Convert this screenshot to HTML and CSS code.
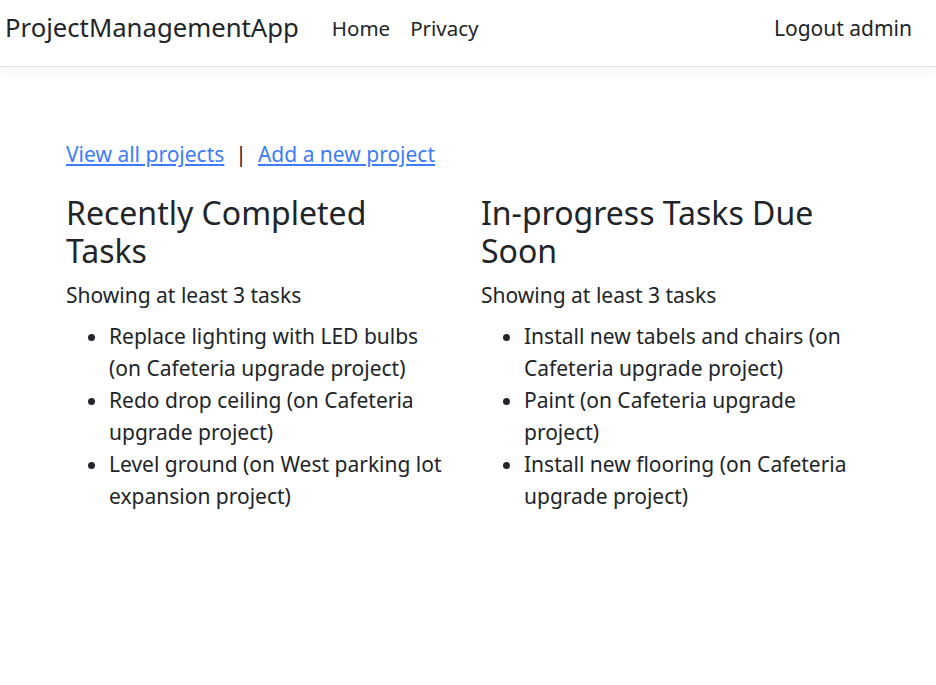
FILE: index.html
```html
<!DOCTYPE html>
<html lang="en">
<head>
<meta charset="utf-8">
<title>ProjectManagementApp</title>
<link rel="stylesheet" href="styles.css">
</head>
<body>
<header class="navbar">
  <a class="brand" href="#">ProjectManagementApp</a>
  <nav class="nav-links">
    <a class="nav-link" href="#">Home</a>
    <a class="nav-link" href="#">Privacy</a>
  </nav>
  <a class="nav-link logout" href="#">Logout admin</a>
</header>
<main class="content">
  <p class="actions">
    <a class="link" href="#">View all projects</a>
    <span class="sep">|</span>
    <a class="link" href="#">Add a new project</a>
  </p>
  <div class="columns">
    <section class="col">
      <h2 class="heading">Recently Completed Tasks</h2>
      <p class="count">Showing at least 3 tasks</p>
      <ul class="tasks">
        <li>Replace lighting with LED bulbs (on Cafeteria upgrade project)</li>
        <li>Redo drop ceiling (on Cafeteria upgrade project)</li>
        <li>Level ground (on West parking lot expansion project)</li>
      </ul>
    </section>
    <section class="col">
      <h2 class="heading">In-progress Tasks Due Soon</h2>
      <p class="count">Showing at least 3 tasks</p>
      <ul class="tasks">
        <li>Install new tabels and chairs (on Cafeteria upgrade project)</li>
        <li>Paint (on Cafeteria upgrade project)</li>
        <li>Install new flooring (on Cafeteria upgrade project)</li>
      </ul>
    </section>
  </div>
</main>
</body>
</html>
```
FILE: styles.css
```css
html, body {
  margin: 0;
  padding: 0;
  background: #ffffff;
}
body {
  font-family: "Noto Sans", "Open Sans", sans-serif;
  font-size: 21px;
  line-height: 32px;
  color: #212529;
}
.navbar {
  display: flex;
  align-items: center;
  height: 56px;
  padding: 0 24px 10px 5px;
  border-bottom: 1px solid #dee2e6;
  box-shadow: 0 4px 12px rgba(0, 0, 0, 0.05);
}
.brand {
  font-size: 25.7px;
  color: #212529;
  text-decoration: none;
  margin-right: 33px;
}
.nav-links {
  display: flex;
  gap: 20px;
  flex: 1;
}
.nav-link {
  font-size: 20.5px;
  color: #212529;
  text-decoration: none;
}
.logout {
  font-size: 21px;
}
.content {
  padding: 71px 0 0 66px;
}
.actions {
  margin: 0;
  display: flex;
  gap: 11px;
}
.link {
  color: #3d7cff;
  text-decoration: underline;
}
.sep {
  color: #212529;
}
.columns {
  display: grid;
  grid-template-columns: 380px 380px;
  column-gap: 35px;
  margin-top: 24px;
}
.heading {
  margin: 0 0 9px 0;
  font-size: 32px;
  line-height: 38px;
  font-weight: 400;
}
.count {
  margin: 0 0 9px 0;
}
.tasks {
  margin: 0;
  padding-left: 43px;
}
```
